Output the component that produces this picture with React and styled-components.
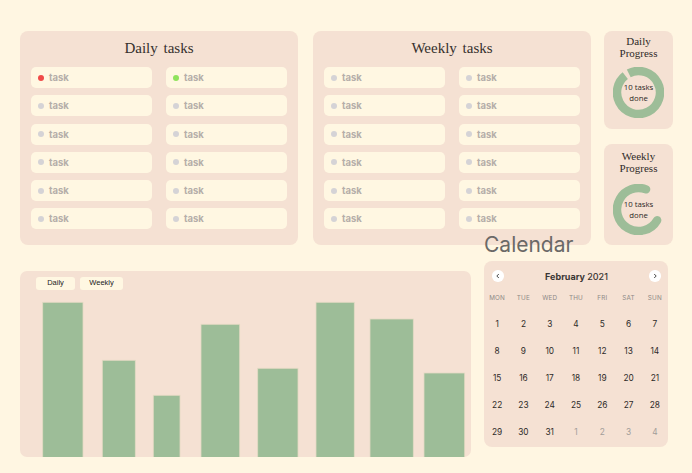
import React from "react";
import styled, { createGlobalStyle } from "styled-components";

const GlobalStyle = createGlobalStyle`
  html, body {
    margin: 0;
    padding: 0;
    background: #fff6e2;
    font-family: Inter, "Liberation Sans", sans-serif;
  }
`;

const Page = styled.div`
  width: 692px;
  height: 473px;
  box-sizing: border-box;
  padding: 31px 0 0 20px;
  overflow: hidden;
`;

const TopRow = styled.div`
  display: flex;
  align-items: stretch;
  height: 214px;
`;

const Panel = styled.div`
  background: #f5e1d3;
  border-radius: 8px;
`;

const TaskPanel = styled(Panel)`
  width: 278px;
  box-sizing: border-box;
  padding: 8px 11px 15px;
  margin-right: ${(p) => p.$gap || 0}px;
`;

const PanelTitle = styled.div`
  font-family: "Liberation Serif", serif;
  font-size: 15px;
  line-height: 18px;
  color: #35302d;
  text-align: center;
  word-spacing: 2px;
  margin-bottom: 10px;
`;

const TaskGrid = styled.div`
  display: grid;
  grid-template-columns: 121px 121px;
  grid-auto-rows: 21px;
  column-gap: 14px;
  row-gap: 7.3px;
`;

const TaskItem = styled.div`
  display: flex;
  align-items: center;
  gap: 5px;
  padding-left: 7px;
  background: #fff7e2;
  border-radius: 5px;
  font-size: 9.5px;
  font-weight: 700;
  color: #b5aea9;
`;

const Dot = styled.span`
  flex-shrink: 0;
  width: 6px;
  height: 6px;
  border-radius: 50%;
  background: ${(p) => p.$color};
`;

const ProgressColumn = styled.div`
  width: 69px;
  display: flex;
  flex-direction: column;
  gap: 15px;
`;

const ProgressCard = styled(Panel)`
  height: ${(p) => p.$h}px;
  box-sizing: border-box;
  padding-top: ${(p) => p.$pt}px;
  display: flex;
  flex-direction: column;
  align-items: center;
`;

const ProgressTitle = styled.div`
  font-family: "Liberation Serif", serif;
  font-size: 11px;
  line-height: 12px;
  color: #2f2a28;
  text-align: center;
  margin-bottom: ${(p) => p.$mb}px;
`;

const Donut = styled.div`
  position: relative;
  width: 51px;
  height: 51px;
  svg {
    display: block;
  }
`;

const DonutLabel = styled.div`
  position: absolute;
  inset: 0;
  display: flex;
  flex-direction: column;
  align-items: center;
  justify-content: center;
  font-family: "Open Sans", "Liberation Sans", sans-serif;
  font-size: 7.8px;
  line-height: 10.5px;
  color: #2b2826;
`;

const BottomRow = styled.div`
  display: flex;
  align-items: flex-start;
  margin-top: -13px;
`;

const ChartPanel = styled(Panel)`
  width: 451px;
  height: 186px;
  margin-top: 38.7px;
  margin-right: 13px;
  box-sizing: border-box;
  padding-top: 6.6px;
  border-radius: 7px;
  overflow: hidden;
  display: flex;
  flex-direction: column;
  svg {
    display: block;
  }
`;

const Tabs = styled.div`
  display: flex;
  gap: 5px;
  padding-left: 16px;
`;

const Tab = styled.div`
  width: ${(p) => p.$w}px;
  height: 12.4px;
  line-height: 12.4px;
  background: #fff7e2;
  border-radius: 3px;
  text-align: center;
  font-family: "Liberation Sans", sans-serif;
  font-size: 7.5px;
  color: #222;
`;

const CalendarColumn = styled.div`
  width: 184px;
`;

const CalendarHeading = styled.div`
  font-size: 21px;
  line-height: 25px;
  color: #6b6967;
  margin-bottom: 4px;
`;

const CalendarPanel = styled(Panel)`
  height: 186px;
  box-sizing: border-box;
  padding-top: 9px;
`;

const MonthBar = styled.div`
  display: flex;
  align-items: center;
  justify-content: space-between;
  padding: 0 7px 0 8px;
  height: 12px;
`;

const NavButton = styled.div`
  width: 11.5px;
  height: 11.5px;
  border-radius: 50%;
  background: #ffffff;
  display: flex;
  align-items: center;
  justify-content: center;
  svg {
    display: block;
  }
`;

const Month = styled.div`
  font-size: 9px;
  color: #3a3633;
  font-weight: 500;
  b {
    font-weight: 700;
  }
`;

const WeekDays = styled.div`
  display: grid;
  grid-template-columns: repeat(7, 1fr);
  height: 10px;
  margin-top: 11px;
  align-items: center;
  text-align: center;
  font-size: 6.3px;
  letter-spacing: 0.2px;
  color: #8e8a87;
`;

const DateGrid = styled.div`
  display: grid;
  grid-template-columns: repeat(7, 1fr);
  grid-auto-rows: 27.2px;
  margin-top: 7px;
  align-items: center;
  text-align: center;
`;

const DateCell = styled.div`
  font-size: 8.3px;
  color: ${(p) => (p.$muted ? "#a29d99" : "#2d2a28")};
`;

const dailyDots = ["#f04a48", "#8fe35c"];

const bars = [
  [22.7, 40.3, 12.3],
  [82.3, 33, 70.3],
  [133.3, 26.7, 105.3],
  [181, 38.7, 34.3],
  [237.7, 40.3, 78.3],
  [296, 38.3, 12.3],
  [350, 43.3, 29],
  [404, 40.7, 83],
];

const weekDays = ["MON", "TUE", "WED", "THU", "FRI", "SAT", "SUN"];

function TaskList({ title, dots = [], gap }) {
  return (
    <TaskPanel $gap={gap}>
      <PanelTitle>{title}</PanelTitle>
      <TaskGrid>
        {Array.from({ length: 12 }).map((_, i) => (
          <TaskItem key={i}>
            <Dot $color={dots[i] || "#d5d3d6"} />
            task
          </TaskItem>
        ))}
      </TaskGrid>
    </TaskPanel>
  );
}

function Ring({ start, length, round }) {
  const r = 21.5;
  const c = 2 * Math.PI * r;
  return (
    <Donut>
      <svg width="51" height="51" viewBox="0 0 51 51">
        <circle
          cx="25.5"
          cy="25.5"
          r={r}
          fill="none"
          stroke="#9dbd98"
          strokeWidth="8.5"
          strokeLinecap={round ? "round" : "butt"}
          strokeDasharray={`${length} ${c}`}
          transform={`rotate(${start} 25.5 25.5)`}
        />
      </svg>
      <DonutLabel>
        <span>10 tasks</span>
        <span>done</span>
      </DonutLabel>
    </Donut>
  );
}

export default function App() {
  const dates = [];
  for (let d = 1; d <= 31; d++) dates.push({ d, muted: false });
  for (let d = 1; d <= 4; d++) dates.push({ d, muted: true });

  return (
    <Page>
      <GlobalStyle />
      <TopRow>
        <TaskList title="Daily  tasks" dots={dailyDots} gap={15} />
        <TaskList title="Weekly  tasks" gap={13} />
        <ProgressColumn>
          <ProgressCard $h={98} $pt={4}>
            <ProgressTitle $mb={8}>
              Daily
              <br />
              Progress
            </ProgressTitle>
            <Ring start={-117} length={130} />
          </ProgressCard>
          <ProgressCard $h={101} $pt={6}>
            <ProgressTitle $mb={10}>
              Weekly
              <br />
              Progress
            </ProgressTitle>
            <Ring start={30} length={97} round />
          </ProgressCard>
        </ProgressColumn>
      </TopRow>

      <BottomRow>
        <ChartPanel>
          <Tabs>
            <Tab $w={39}>Daily</Tab>
            <Tab $w={43}>Weekly</Tab>
          </Tabs>
          <svg width="451" height="167" viewBox="0 0 451 167">
            {bars.map(([x, w, y], i) => (
              <rect
                key={i}
                x={x}
                y={y}
                width={w}
                height={170 - y}
                fill="#9dbd98"
                stroke="#e3dac3"
                strokeWidth="0.8"
              />
            ))}
          </svg>
        </ChartPanel>

        <CalendarColumn>
          <CalendarHeading>Calendar</CalendarHeading>
          <CalendarPanel>
            <MonthBar>
              <NavButton>
                <svg width="6" height="6" viewBox="0 0 6 6">
                  <path d="M3.8 1 L1.8 3 L3.8 5" fill="none" stroke="#333" strokeWidth="0.9" />
                </svg>
              </NavButton>
              <Month>
                <b>February</b> 2021
              </Month>
              <NavButton>
                <svg width="6" height="6" viewBox="0 0 6 6">
                  <path d="M2.2 1 L4.2 3 L2.2 5" fill="none" stroke="#333" strokeWidth="0.9" />
                </svg>
              </NavButton>
            </MonthBar>
            <WeekDays>
              {weekDays.map((w) => (
                <span key={w}>{w}</span>
              ))}
            </WeekDays>
            <DateGrid>
              {dates.map((item, i) => (
                <DateCell key={i} $muted={item.muted}>
                  {item.d}
                </DateCell>
              ))}
            </DateGrid>
          </CalendarPanel>
        </CalendarColumn>
      </BottomRow>
    </Page>
  );
}
